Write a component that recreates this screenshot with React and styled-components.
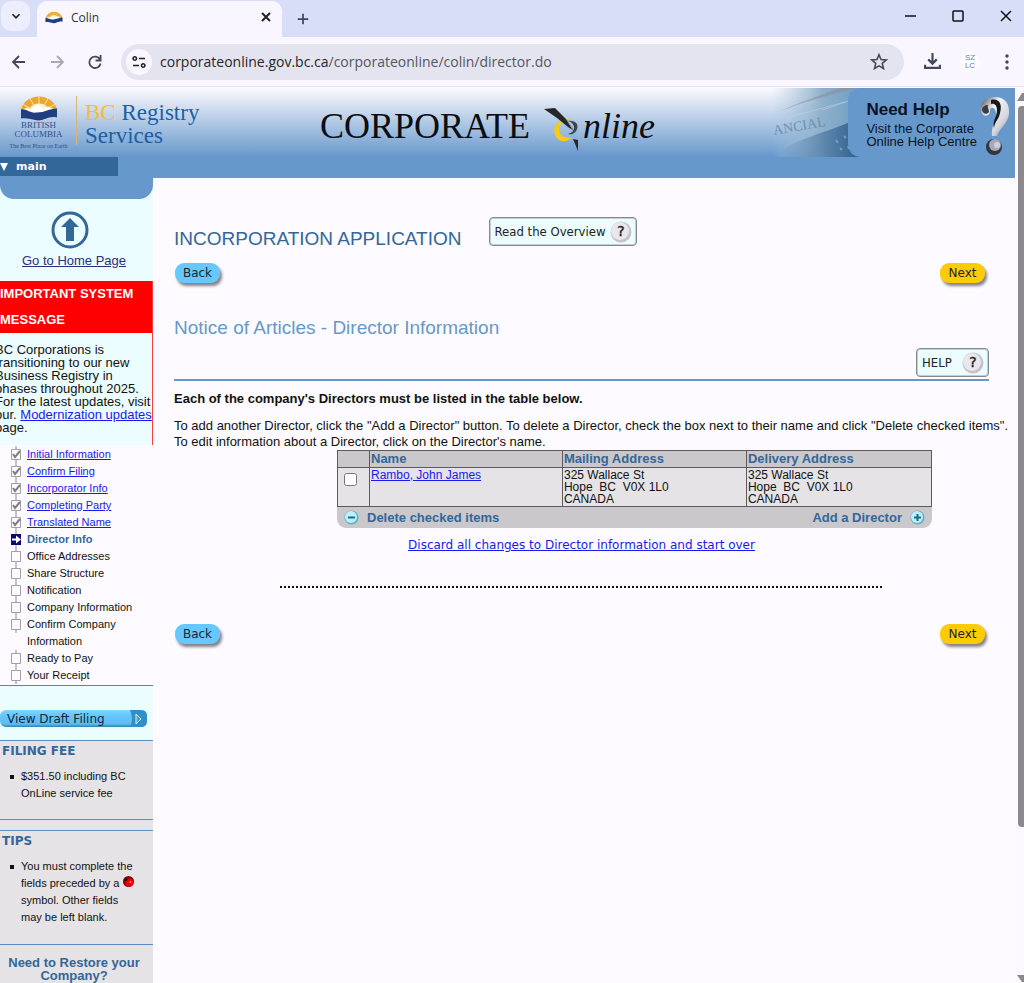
import React from 'react';
import { useState } from 'react';
import styled, { createGlobalStyle } from 'styled-components';

const sans = `'Liberation Sans', Arial, sans-serif`;
const verdana = `'DejaVu Sans', Verdana, sans-serif`;
const serif = `'Liberation Serif', 'Times New Roman', serif`;
const chrome = `'Open Sans', 'Noto Sans', sans-serif`;

const GlobalStyle = createGlobalStyle`
  * {
    box-sizing: border-box;
  }
  body {
    margin: 0;
    background-color: #fdfbff;
    font-family: ${sans};
    color: #111;
  }
  h1, h2, h3, p, ul {
    margin: 0;
    padding: 0;
    font-weight: normal;
  }
  ul {
    list-style: none;
  }
  a {
    color: #1a1aee;
  }
  button {
    border: 0;
    padding: 0;
    background: none;
    color: inherit;
    font-family: inherit;
    cursor: pointer;
  }
  svg {
    display: block;
    flex-shrink: 0;
  }
`;

const Window = styled.div`
  display: flex;
  flex-direction: column;
  height: 100vh;
  overflow: hidden;
`;

/* browser frame */
const TabStrip = styled.div`
  display: flex;
  align-items: flex-end;
  height: 37px;
  flex-shrink: 0;
  background-color: #d9def8;
`;

const TabSearch = styled.button`
  display: flex;
  align-items: center;
  justify-content: center;
  width: 29px;
  height: 30px;
  margin: 0 7px 6px 1px;
  border-radius: 10px;
  background-color: #eceefc;
`;

const Tab = styled.div`
  display: flex;
  align-items: center;
  gap: 8px;
  width: 245px;
  height: 36px;
  padding: 0 8px;
  padding-bottom: 4px;
  border-radius: 10px 10px 0 0;
  background-color: #f9f6ff;
  font-family: ${chrome};
  font-size: 12px;
  color: #333;
  span {
    flex: 1;
  }
`;

const IconButton = styled.button`
  display: flex;
  align-items: center;
  justify-content: center;
  width: ${(props) => props.$w || 38}px;
  height: 36px;
`;

const WindowButtons = styled.div`
  display: flex;
  margin-left: auto;
  padding-bottom: 3px;
  margin-right: -6px;
`;

const Toolbar = styled.div`
  display: flex;
  align-items: center;
  height: 50px;
  flex-shrink: 0;
  border-bottom: 1px solid #e6e2f2;
  background-color: #f9f6ff;
`;

const AddressBar = styled.div`
  display: flex;
  align-items: center;
  flex: 1;
  gap: 8px;
  height: 36px;
  margin-left: 7px;
  padding: 0 16px 0 5px;
  border-radius: 18px;
  background-color: #e4e4f0;
`;

const SiteButton = styled.button`
  display: flex;
  align-items: center;
  justify-content: center;
  width: 26px;
  height: 26px;
  border-radius: 13px;
  background-color: #f9f6ff;
`;

const Url = styled.div`
  flex: 1;
  font-family: ${chrome};
  font-size: 14px;
  color: #55565e;
  span {
    color: #26262c;
  }
`;

const Extension = styled.button`
  width: 20px;
  height: 20px;
  margin-right: 10px;
  border-radius: 10px;
  background-color: #fdfcff;
  color: #6f8495;
  font-family: ${sans};
  font-size: 8px;
  line-height: 8px;
`;

const Viewport = styled.div`
  display: flex;
  flex: 1;
  min-height: 0;
  padding-top: 1px;
`;

const Document = styled.div`
  flex: 1;
  min-width: 0;
  overflow: hidden;
`;

const ScrollBar = styled.div`
  display: flex;
  flex-direction: column;
  align-items: flex-end;
  width: 9px;
  padding: 4px 0 1px;
  background-color: #fbf9fd;
`;

const Thumb = styled.div`
  width: 6px;
  height: 81%;
  margin: 5px 0 auto;
  border-radius: 4px 0 0 4px;
  background-color: #8b898c;
`;

/* page banner */
const Banner = styled.header`
  background: linear-gradient(#fbf9fe, #6698cc 69px);
`;

const BannerTop = styled.div`
  display: flex;
  height: 69px;
`;

const Logo = styled.div`
  display: flex;
  width: 320px;
  padding: 8px 0 0 8px;
`;

const Crest = styled.div`
  display: flex;
  flex-direction: column;
  align-items: center;
  width: 61px;
  margin-right: 7px;
  font-family: ${serif};
  font-size: 9px;
  line-height: 9px;
  color: #345183;
  text-align: center;
  white-space: nowrap;
  small {
    margin-top: 2px;
    border-top: 1px solid #b9a873;
    font-size: 6px;
    line-height: 8px;
  }
`;

const LogoName = styled.div`
  height: 49px;
  padding: 5px 0 0 8px;
  border-left: 1px solid #d7b778;
  font-family: ${serif};
  font-size: 23px;
  line-height: 23px;
  color: #1c5fa5;
  white-space: nowrap;
  span {
    color: #f3bd3c;
  }
`;

const Brand = styled.div`
  display: flex;
  padding-top: 14px;
  font-family: ${serif};
  font-size: 36px;
  line-height: 48px;
  color: #0c0d10;
  svg {
    margin: 5px 0 0 11px;
  }
`;

const HelpCentre = styled.a`
  display: flex;
  margin-left: auto;
  color: #0b1320;
  text-decoration: none;
`;

const HelpText = styled.div`
  padding: 13px 0 0 4px;
  background-color: #6698cc;
  font-size: 13px;
  line-height: 13px;
  white-space: nowrap;
  strong {
    display: block;
    margin-bottom: 4px;
    font-size: 17px;
    line-height: 17px;
  }
`;

const MarkHolder = styled.div`
  background-color: #6698cc;
`;

const NavBar = styled.nav`
  height: 21px;
`;

const NavItem = styled.button`
  display: flex;
  align-items: center;
  gap: 8px;
  width: 118px;
  height: 19px;
  background-color: #336699;
  font-family: ${verdana};
  font-size: 11px;
  font-weight: bold;
  color: #fff;
`;

const Columns = styled.div`
  display: flex;
`;

/* left column */
const Sidebar = styled.aside`
  width: 153px;
  flex-shrink: 0;
  background-color: #ebfdff;
`;

const SidebarCap = styled.div`
  height: 21px;
  border-radius: 0 0 14px 14px;
  background-color: #6698cc;
`;

const HomeLink = styled.a`
  display: flex;
  flex-direction: column;
  align-items: center;
  gap: 4px;
  height: 82px;
  padding: 12px 5px 0 0;
  font-size: 13px;
  line-height: 16px;
  color: #2e2e7c;
  svg {
    margin-right: 8px;
  }
`;

const Notice = styled.section`
  overflow: hidden;
  border-right: 1px solid #ff3b3b;
  h3 {
    background-color: #ff0000;
    color: #fff;
    font-size: 13px;
    font-weight: bold;
    line-height: 26px;
  }
  p {
    margin-left: -5px;
    padding: 10px 0 11px;
    font-size: 13px;
    line-height: 13px;
    white-space: nowrap;
  }
`;

const Steps = styled.ul`
  padding: 1px 0 1px 10px;
  border-bottom: 1px solid #4f86bd;
  background-color: #fdfbff;
`;

const Step = styled.li`
  display: flex;
  gap: 5px;
  padding-right: 20px;
  font-size: 11px;
  line-height: 17px;
  font-weight: ${(props) => (props.$current ? 'bold' : 'normal')};
  color: ${(props) => (props.$current ? '#336699' : '#111')};
`;

const DraftArea = styled.div`
  padding: 24px 6px 13px 0;
`;

const DraftButton = styled.button`
  display: flex;
  align-items: center;
  justify-content: space-between;
  width: 147px;
  height: 17px;
  padding-left: 7px;
  border-radius: 6px;
  background: linear-gradient(#86d6ff, #66c8ff 5px, #5cbcf2 14px, #2f83ae);
  font-family: ${verdana};
  font-size: 12px;
  line-height: 16px;
  color: #10283a;
`;

const InfoBox = styled.section`
  height: ${(props) => props.$h}px;
  padding: 2px;
  border-top: 1px solid #5b8fc4;
  border-bottom: 1px solid #5b8fc4;
  background-color: #e5e3e6;
  h3 {
    margin-bottom: 8px;
    font-family: ${verdana};
    font-size: 12px;
    line-height: 17px;
    font-weight: bold;
    color: #336699;
  }
  li {
    display: flex;
    gap: 7px;
    padding: 0 14px 0 8px;
    font-size: 11px;
    line-height: 17px;
  }
  li::before {
    content: '';
    width: 4px;
    height: 4px;
    flex-shrink: 0;
    margin-top: 7px;
    background-color: #111;
  }
  li svg {
    display: inline;
  }
`;

const BoxGap = styled.div`
  height: 10px;
  background-color: #e5e3e6;
`;

const Restore = styled.p`
  padding: 11px 5px 20px 0;
  background-color: #e5e3e6;
  font-size: 13px;
  line-height: 13px;
  text-align: center;
  a {
    color: #336699;
    font-weight: bold;
    text-decoration: none;
  }
`;

/* main column */
const Main = styled.main`
  flex: 1;
  min-width: 0;
  padding: 39px 26px 0 21px;
`;

const TitleRow = styled.div`
  display: flex;
  gap: 27px;
  height: 46px;
  h1 {
    padding-top: 10px;
    font-size: 19px;
    line-height: 24px;
    color: #336699;
  }
`;

const ButtonRow = styled.div`
  display: flex;
  justify-content: space-between;
  padding: 0 4px 0 1px;
`;

const PillButton = styled.button`
  width: 45px;
  height: 20px;
  border-radius: 9px;
  background-color: ${(props) => (props.$gold ? '#ffcb05' : '#66c8ff')};
  box-shadow: 2px 3px 3px #85838a;
  font-family: ${verdana};
  font-size: 12px;
  line-height: 16px;
  color: #1a2530;
`;

const HelpButton = styled.button`
  display: flex;
  align-items: center;
  justify-content: space-between;
  gap: 4px;
  min-width: 73px;
  height: 29px;
  padding: 0 4px 0 5px;
  border: 1px solid #85888c;
  border-radius: 4px;
  box-shadow: inset 0 0 0 1px #c5ced2;
  background-color: #ecfdff;
  font-family: 'DejaVu Sans Condensed', 'DejaVu Sans', Verdana, sans-serif;
  font-size: 13px;
  color: #222;
`;

const SectionHead = styled.div`
  display: flex;
  justify-content: space-between;
  align-items: flex-end;
  height: 98px;
  padding-bottom: 2px;
  border-bottom: 2px solid #6698cc;
  h2 {
    align-self: flex-start;
    padding-top: 33px;
    font-size: 19px;
    line-height: 24px;
    color: #6698cc;
  }
`;

const Lead = styled.p`
  padding: 10px 0 11px;
  font-size: 13px;
  line-height: 16px;
  font-weight: bold;
`;

const Intro = styled.p`
  margin-right: -26px;
  font-size: 13px;
  line-height: 16px;
`;

const DirectorArea = styled.div`
  margin: 0 7% 0 20%;
`;

const DirectorTable = styled.table`
  width: 100%;
  table-layout: fixed;
  border-collapse: collapse;
  border: 1px solid #5c5a5e;
  background-color: #e5e3e6;
  font-size: 12px;
  line-height: 12px;
  th,
  td {
    height: 16px;
    padding: 1px;
    border: 1px solid #5c5a5e;
    text-align: left;
    vertical-align: top;
  }
  th {
    background-color: #cac8cb;
    color: #336699;
    font-size: 13px;
    line-height: 14px;
  }
  input {
    display: block;
    width: 13px;
    height: 13px;
    margin: 4px 5px;
  }
`;

const TableFoot = styled.div`
  display: flex;
  justify-content: space-between;
  height: 21px;
  padding: 0 7px;
  border-radius: 0 0 9px 9px;
  background-color: #cac8cb;
`;

const FootButton = styled.button`
  display: flex;
  align-items: center;
  gap: 8px;
  font-size: 13px;
  font-weight: bold;
  color: #336699;
`;

const Discard = styled.p`
  padding-top: 8px;
  text-align: center;
  font-family: ${verdana};
  font-size: 12px;
  line-height: 18px;
`;

const Dots = styled.hr`
  width: 74%;
  height: 2px;
  margin: 32px auto 36px;
  border: 0;
  background: repeating-linear-gradient(90deg, #111 0 2px, transparent 2px 4px);
`;

const Stroke = ({ d, size = 16, color = '#44475a', width = 2 }) => (
  <svg width={size} height={size} viewBox="0 0 16 16" fill="none" stroke={color} strokeWidth={width} aria-hidden="true">
    <path d={d} />
  </svg>
);

const Sun = ({ width, height }) => (
  <svg width={width} height={height} viewBox="0 0 38 24" aria-hidden="true">
    <path d="M1 15a18 15 0 0 1 36 0z" fill="#e9a830" />
    <path d="M9 15a10 8 0 0 1 20 0z" fill="#fff3cf" />
    <path d="M19 0v8M10 2l4 7M28 2l-4 7M3 8l8 4M35 8l-8 4" stroke="#fbe2a3" strokeWidth="1" />
    <path d="M1 14l6-3 4 2 7-6 5 5 5-2 9 4v3H1z" fill="#fff" />
    <path d="M1 13c6-1 8 4 16 3 8 0 12-4 20-4v9c-8-2-12 3-19 3-7-1-11-3-17-2z" fill="#1f3f80" />
  </svg>
);

const Quill = () => (
  <svg width="42" height="46" viewBox="0 0 42 46" aria-hidden="true">
    <path d="M31 12c-14-3-22 10-15 19 4 5 11 4 15-1-8 2-13-2-13-8 0-5 5-10 13-10z" fill="#f9cb12" />
    <path d="M27 14c7-1 11 3 9 8-1 4-5 6-9 5 4-1 6-3 6-6s-2-6-6-7z" fill="#3f444c" />
    <path d="M3 2L14 1 25 12 33 24 27 20 16 11z" fill="#25272b" />
    <path d="M26 13l6 10" stroke="#8d939b" strokeWidth="1" fill="none" />
    <path d="M32 32l5 1v11z" fill="#25272b" />
  </svg>
);

const Ledger = () => (
  <svg width="120" height="69" viewBox="0 0 120 69" aria-hidden="true">
    <defs>
      <linearGradient id="paper" x1="0" x2="1" y1="0" y2="0">
        <stop offset="0.1" stopColor="#a9c3da" stopOpacity="0" />
        <stop offset="0.6" stopColor="#8eb0cb" />
        <stop offset="1" stopColor="#6d9cc2" />
      </linearGradient>
      <linearGradient id="shade" x1="0" x2="1" y1="0" y2="0">
        <stop offset="0.1" stopColor="#3f6f9f" stopOpacity="0" />
        <stop offset="1" stopColor="#335f8c" />
      </linearGradient>
    </defs>
    <path d="M20 0h100v69H20z" fill="url(#paper)" />
    <path d="M30 69C50 52 80 46 108 34L118 28v41z" fill="url(#shade)" />
    <path d="M36 24C60 14 84 8 108 2l6-2H98C80 7 58 14 36 24z" fill="#8a8f9b" opacity="0.6" />
    <path d="M44 30l66-18M66 16l8-3M80 22l24-8" stroke="#c2d8e6" strokeWidth="1" opacity="0.5" />
    <path d="M94 52l2 3M98 60l2 2M102 48l2 2M106 58l1 3" stroke="#79b6d4" strokeWidth="2" opacity="0.7" />
    <text x="32" y="47" fontFamily="Liberation Serif" fontSize="14" fill="#5d7f9f" opacity="0.7" transform="rotate(-10 32 47)">
      ANCIAL
    </text>
    <path d="M120 0c-9 0-14 5-14 12v42c0 9 4 15 14 15z" fill="#6698cc" />
  </svg>
);

const SilverMark = () => (
  <svg width="38" height="69" viewBox="0 0 38 69" aria-hidden="true">
    <defs>
      <linearGradient id="silver" x1="0" x2="1" y1="0" y2="1">
        <stop offset="0" stopColor="#44464d" />
        <stop offset="0.35" stopColor="#f4f4f6" />
        <stop offset="0.7" stopColor="#d4d5dc" />
        <stop offset="1" stopColor="#6a6d76" />
      </linearGradient>
    </defs>
    <path d="M4 22C2 14 10 9 18 9c10 0 15 7 14 17-1 10-11 16-12 22h-5c-1-10 4-14 4-22 0-4-2-7-5-6-2 2 0 5-3 7-4 2-7-1-7-5z" fill="url(#silver)" />
    <path d="M5 22c1 4 5 5 7 2 0-4-2-4-1-7-3 0-6 2-6 5z" fill="#3b3d43" />
    <path d="M14 12c7-2 12 3 9 13-1 6-5 8-6 15-2-7 3-11 3-18 0-4-2-7-6-6z" fill="#15171b" />
    <circle cx="17" cy="59" r="8" fill="#33363c" />
    <circle cx="18" cy="57" r="6" fill="#a7a9b8" />
    <circle cx="20" cy="57" r="3" fill="#d0d0dc" />
  </svg>
);

const StepIcon = ({ state }) => (
  <svg width="12" height="17" viewBox="0 0 12 17" aria-hidden="true">
    <path d="M6 0v17" stroke="#8b898c" />
    {state === 'current' ? (
      <>
        <path d="M1 3h10v11H1z" fill="#0a0a72" />
        <path d="M2 7.500h4V4.500l5 4-5 4V9.500H2z" fill="#fff" />
      </>
    ) : (
      <path d="M1.500 3.500h9v10h-9z" fill="#fdfbff" stroke="#a3a1a5" />
    )}
    {state === 'done' && <path d="M3 8l2 3 5-6" fill="none" stroke="#807e83" strokeWidth="2" />}
  </svg>
);

const Orb = ({ plus }) => (
  <svg width="15" height="15" viewBox="0 0 15 15" aria-hidden="true">
    <circle cx="7.500" cy="7.500" r="7" fill="#62aebb" />
    <circle cx="7" cy="7" r="6" fill="#b9f1fb" />
    <path d={plus ? 'M4 7.500h7M7.500 4v7' : 'M4 7.500h7'} stroke="#2b628f" strokeWidth="2" />
  </svg>
);

const QuestionBall = () => (
  <svg width="22" height="22" viewBox="0 0 22 22" aria-hidden="true">
    <circle cx="11" cy="11" r="10.500" fill="#c6c4ca" />
    <circle cx="10" cy="10" r="9" fill="#e9e6ec" />
    <text x="11" y="15" textAnchor="middle" fontFamily="DejaVu Sans" fontSize="14" fill="#222" stroke="#222" strokeWidth="0.4">
      ?
    </text>
  </svg>
);

const steps = [
  { name: 'Initial Information', state: 'done' },
  { name: 'Confirm Filing', state: 'done' },
  { name: 'Incorporator Info', state: 'done' },
  { name: 'Completing Party', state: 'done' },
  { name: 'Translated Name', state: 'done' },
  { name: 'Director Info', state: 'current' },
  { name: 'Office Addresses' },
  { name: 'Share Structure' },
  { name: 'Notification' },
  { name: 'Company Information' },
  { name: 'Confirm Company Information' },
  { name: 'Ready to Pay' },
  { name: 'Your Receipt' },
];

const Address = () => (
  <>
    325 Wallace St
    <br />
    Hope&nbsp; BC&nbsp; V0X 1L0
    <br />
    CANADA
  </>
);

const BackNext = () => (
  <ButtonRow>
    <PillButton>Back</PillButton>
    <PillButton $gold>Next</PillButton>
  </ButtonRow>
);

const BrowserFrame = () => (
  <>
    <TabStrip>
      <TabSearch aria-label="Search tabs">
        <Stroke size={14} color="#222" d="M4 6l4 4 4-4" />
      </TabSearch>
      <Tab>
        <Sun width={18} height={13} />
        <span>Colin</span>
        <button aria-label="Close tab">
          <Stroke size={16} color="#222" d="M4 4l8 8M12 4l-8 8" />
        </button>
      </Tab>
      <IconButton $w={42} aria-label="New tab">
        <Stroke d="M8 2v12M2 8h12" width={2} size={14} />
      </IconButton>
      <WindowButtons>
        <IconButton $w={48} aria-label="Minimize">
          <Stroke d="M3 8h11" color="#111" width={1.5} />
        </IconButton>
        <IconButton $w={48} aria-label="Maximize">
          <Stroke d="M4 3h8q1 0 1 1v8q0 1-1 1H4q-1 0-1-1V4q0-1 1-1z" color="#111" width={1.5} />
        </IconButton>
        <IconButton $w={48} aria-label="Close">
          <Stroke d="M3 3l10 10M13 3L3 13" color="#111" width={1.5} />
        </IconButton>
      </WindowButtons>
    </TabStrip>
    <Toolbar>
      <IconButton aria-label="Back">
        <Stroke d="M14 8H3M8 2L2 8l6 6" width={1.8} />
      </IconButton>
      <IconButton aria-label="Forward">
        <Stroke d="M2 8h11M8 2l6 6-6 6" color="#aaa9b3" width={1.8} />
      </IconButton>
      <IconButton aria-label="Reload">
        <Stroke d="M13 5.500A5.700 5.700 0 1 0 13.600 9.500M13.600 1v5.500H8.500" width={1.8} />
      </IconButton>
      <AddressBar>
        <SiteButton aria-label="Site information">
          <Stroke
            d="M8 4.500h6M2 11.500h6M5.500 4.500a1.700 1.700 0 1 1-3.400 0a1.700 1.700 0 1 1 3.400 0M13.900 11.500a1.700 1.700 0 1 1-3.400 0a1.700 1.700 0 1 1 3.400 0"
            color="#222"
            width={1.6}
          />
        </SiteButton>
        <Url>
          <span>corporateonline.gov.bc.ca</span>/corporateonline/colin/director.do
        </Url>
        <Stroke d="M8 1.500l1.800 4.300 4.700.4-3.600 3 1.100 4.600L8 11.400l-4 2.400 1.100-4.600-3.600-3 4.700-.4z" width={1.4} size={18} />
      </AddressBar>
      <IconButton $w={56} aria-label="Downloads">
        <Stroke d="M8 0v10M4 6l4 4 4-4M1 11v3h14v-3" size={17} />
      </IconButton>
      <Extension aria-label="Extension">
        SZ
        <br />
        LC
      </Extension>
      <IconButton $w={34} aria-label="Menu">
        <svg width="4" height="16" viewBox="0 0 4 16" fill="#44475a" aria-hidden="true">
          <circle cx="2" cy="2" r="1.700" />
          <circle cx="2" cy="8" r="1.700" />
          <circle cx="2" cy="14" r="1.700" />
        </svg>
      </IconButton>
    </Toolbar>
  </>
);

const PageBanner = () => (
  <Banner>
    <BannerTop>
      <Logo>
        <Crest>
          <Sun width={38} height={25} />
          <div>
            BRITISH
            <br />
            COLUMBIA
          </div>
          <small>The Best Place on Earth</small>
        </Crest>
        <LogoName>
          <span>BC</span> Registry
          <br />
          Services
        </LogoName>
      </Logo>
      <Brand>
        CORPORATE
        <Quill />
        <em>nline</em>
      </Brand>
      <HelpCentre href="#help">
        <Ledger />
        <HelpText>
          <strong>Need Help</strong>
          Visit the Corporate
          <br />
          Online Help Centre
        </HelpText>
        <MarkHolder>
          <SilverMark />
        </MarkHolder>
      </HelpCentre>
    </BannerTop>
    <NavBar>
      <NavItem>
        <svg width="8" height="8" viewBox="0 0 8 8" fill="#fff" aria-hidden="true">
          <path d="M0 0h8L4 8z" />
        </svg>
        main
      </NavItem>
    </NavBar>
  </Banner>
);

const LeftColumn = () => (
  <Sidebar>
    <SidebarCap />
    <HomeLink href="#home">
      <svg width="38" height="38" viewBox="0 0 38 38" aria-hidden="true">
        <circle cx="19" cy="19" r="17" fill="#ebfdff" stroke="#336699" strokeWidth="3" />
        <path d="M19 7l9 9h-5v14h-8V16h-5z" fill="#336699" />
      </svg>
      Go to Home Page
    </HomeLink>
    <Notice>
      <h3>
        IMPORTANT SYSTEM
        <br />
        MESSAGE
      </h3>
      <p>
        BC Corporations is
        <br />
        transitioning to our new
        <br />
        Business Registry in
        <br />
        phases throughout 2025.
        <br />
        For the latest updates, visit
        <br />
        our. <a href="#modernization">Modernization updates</a>
        <br />
        page.
      </p>
    </Notice>
    <Steps>
      {steps.map((step) => (
        <Step key={step.name} $current={step.state === 'current'}>
          <StepIcon state={step.state} />
          {step.state === 'done' ? <a href="#step">{step.name}</a> : step.name}
        </Step>
      ))}
    </Steps>
    <DraftArea>
      <DraftButton>
        View Draft Filing
        <svg width="17" height="17" viewBox="0 0 17 17" aria-hidden="true">
          <path d="M0 0h11q6 0 6 6v5q0 6-6 6H0q4-8 0-17z" fill="#2f8fc6" />
          <path d="M6 4l5 5-5 5z" fill="#3aa7e0" stroke="#d4f1ff" />
        </svg>
      </DraftButton>
    </DraftArea>
    <InfoBox $h={80}>
      <h3>FILING FEE</h3>
      <ul>
        <li>$351.50 including BC OnLine service fee</li>
      </ul>
    </InfoBox>
    <BoxGap />
    <InfoBox $h={115}>
      <h3>TIPS</h3>
      <ul>
        <li>
          <span>
            You must complete the
            <br />
            fields preceded by a{' '}
            <svg width="11" height="11" viewBox="0 0 11 11" role="img" aria-label="required">
              <circle cx="5.500" cy="5.500" r="5.500" fill="#8a0000" />
              <circle cx="6.500" cy="6.500" r="4" fill="#f00000" />
              <circle cx="7.500" cy="6" r="1" fill="#ff8d8d" />
              <circle cx="3" cy="3.500" r="1.500" fill="#2b0000" />
            </svg>
            <br />
            symbol. Other fields
            <br />
            may be left blank.
          </span>
        </li>
      </ul>
    </InfoBox>
    <Restore>
      <a href="#restore">
        Need to Restore your
        <br />
        Company?
      </a>
    </Restore>
  </Sidebar>
);

const App = () => {
  const [checked, setChecked] = useState(false);

  return (
    <Window>
      <GlobalStyle />
      <BrowserFrame />
      <Viewport>
        <Document>
          <PageBanner />
          <Columns>
            <LeftColumn />
            <Main>
              <TitleRow>
                <h1>INCORPORATION APPLICATION</h1>
                <HelpButton>
                  Read the Overview
                  <QuestionBall />
                </HelpButton>
              </TitleRow>
              <BackNext />
              <SectionHead>
                <h2>Notice of Articles - Director Information</h2>
                <HelpButton>
                  HELP
                  <QuestionBall />
                </HelpButton>
              </SectionHead>
              <Lead>Each of the company's Directors must be listed in the table below.</Lead>
              <Intro>
                To add another Director, click the "Add a Director" button. To delete a Director, check the box next to
                their name and click "Delete checked items".
                <br />
                To edit information about a Director, click on the Director's name.
              </Intro>
              <DirectorArea>
                <DirectorTable>
                  <colgroup>
                    <col width="32" />
                    <col />
                    <col width="184" />
                    <col width="185" />
                  </colgroup>
                  <thead>
                    <tr>
                      <th aria-label="Select"></th>
                      <th>Name</th>
                      <th>Mailing Address</th>
                      <th>Delivery Address</th>
                    </tr>
                  </thead>
                  <tbody>
                    <tr>
                      <td>
                        <input
                          type="checkbox"
                          aria-label="Rambo, John James"
                          checked={checked}
                          onChange={() => setChecked(!checked)}
                        />
                      </td>
                      <td>
                        <a href="#director">Rambo, John James</a>
                      </td>
                      <td>
                        <Address />
                      </td>
                      <td>
                        <Address />
                      </td>
                    </tr>
                  </tbody>
                </DirectorTable>
                <TableFoot>
                  <FootButton>
                    <Orb />
                    Delete checked items
                  </FootButton>
                  <FootButton>
                    Add a Director
                    <Orb plus />
                  </FootButton>
                </TableFoot>
              </DirectorArea>
              <Discard>
                <a href="#discard">Discard all changes to Director information and start over</a>
              </Discard>
              <Dots />
              <BackNext />
            </Main>
          </Columns>
        </Document>
        <ScrollBar>
          <svg width="7" height="9" viewBox="0 0 7 9" fill="#8b898c" aria-hidden="true">
            <path d="M0 9l5-8h2v8z" />
          </svg>
          <Thumb />
          <svg width="7" height="7" viewBox="0 0 7 7" fill="#8b898c" aria-hidden="true">
            <path d="M0 0h7v7H5z" />
          </svg>
        </ScrollBar>
      </Viewport>
    </Window>
  );
};

export default App;
